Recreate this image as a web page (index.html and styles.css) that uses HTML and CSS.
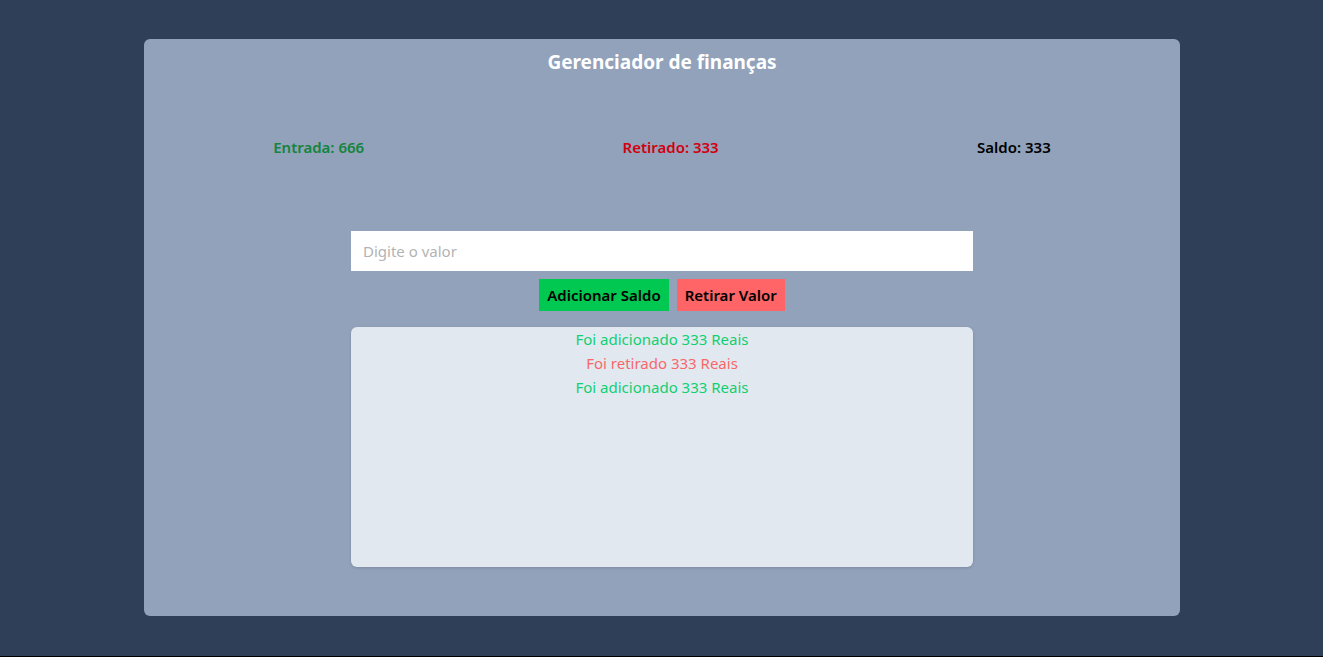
FILE: index.html
```html
<!DOCTYPE html>
<html lang="pt-BR">
<head>
<meta charset="utf-8">
<title>Gerenciador de finanças</title>
<link rel="stylesheet" href="styles.css">
</head>
<body>
<main class="page">
  <section class="panel">
    <h1 class="title">Gerenciador de finanças</h1>
    <div class="stats">
      <span class="stat stat-in">Entrada: 666</span>
      <span class="stat stat-out">Retirado: 333</span>
      <span class="stat stat-total">Saldo: 333</span>
    </div>
    <div class="form">
      <input class="value-input" type="text" placeholder="Digite o valor">
      <div class="actions">
        <button class="btn btn-add">Adicionar Saldo</button>
        <button class="btn btn-remove">Retirar Valor</button>
      </div>
      <div class="log">
        <p class="log-item log-add">Foi adicionado 333 Reais</p>
        <p class="log-item log-remove">Foi retirado 333 Reais</p>
        <p class="log-item log-add">Foi adicionado 333 Reais</p>
      </div>
    </div>
  </section>
</main>
</body>
</html>
```

FILE: styles.css
```css
* { box-sizing: border-box; }
html, body { margin: 0; padding: 0; }
body {
  background: #2f3f57;
  font-family: "Noto Sans", "Open Sans", sans-serif;
  height: 657px;
  border-bottom: 1px solid #000;
}
.page {
  padding: 39px 143px 0 144px;
}
.panel {
  background: #91a2ba;
  border-radius: 6px;
  height: 577px;
  padding: 11px 0 0;
}
.title {
  margin: 0;
  text-align: center;
  color: #fff;
  font-size: 19px;
  line-height: 25px;
  font-weight: 700;
}
.stats {
  margin-top: 60px;
  display: flex;
  justify-content: space-around;
  font-size: 15px;
  line-height: 24px;
  font-weight: 600;
}
.stat-in { color: #15843d; }
.stat-out { color: #d2000f; }
.stat-total { color: #000; }
.form {
  margin: 72px auto 0;
  width: 622px;
  display: flex;
  flex-direction: column;
  align-items: center;
}
.value-input {
  width: 100%;
  height: 40px;
  border: 0;
  outline: none;
  background: #fff;
  padding: 0 12px;
  font-family: inherit;
  font-size: 15px;
  color: #333;
}
.value-input::placeholder { color: #b3b3b3; }
.actions {
  margin-top: 8px;
  display: flex;
  gap: 8px;
}
.btn {
  height: 32px;
  border: 0;
  padding: 0 8px;
  font-family: inherit;
  font-size: 15px;
  font-weight: 600;
  color: #000;
  cursor: pointer;
}
.btn-add { background: #00c850; }
.btn-remove { background: #ff6466; }
.log {
  margin-top: 16px;
  width: 100%;
  height: 240px;
  background: #e2e8f0;
  border-radius: 6px;
  box-shadow: 0 1px 3px rgba(0,0,0,0.15);
}
.log-item {
  margin: 0;
  text-align: center;
  font-size: 15px;
  line-height: 24px;
}
.log-add { color: #10d070; }
.log-remove { color: #f86868; }
```
